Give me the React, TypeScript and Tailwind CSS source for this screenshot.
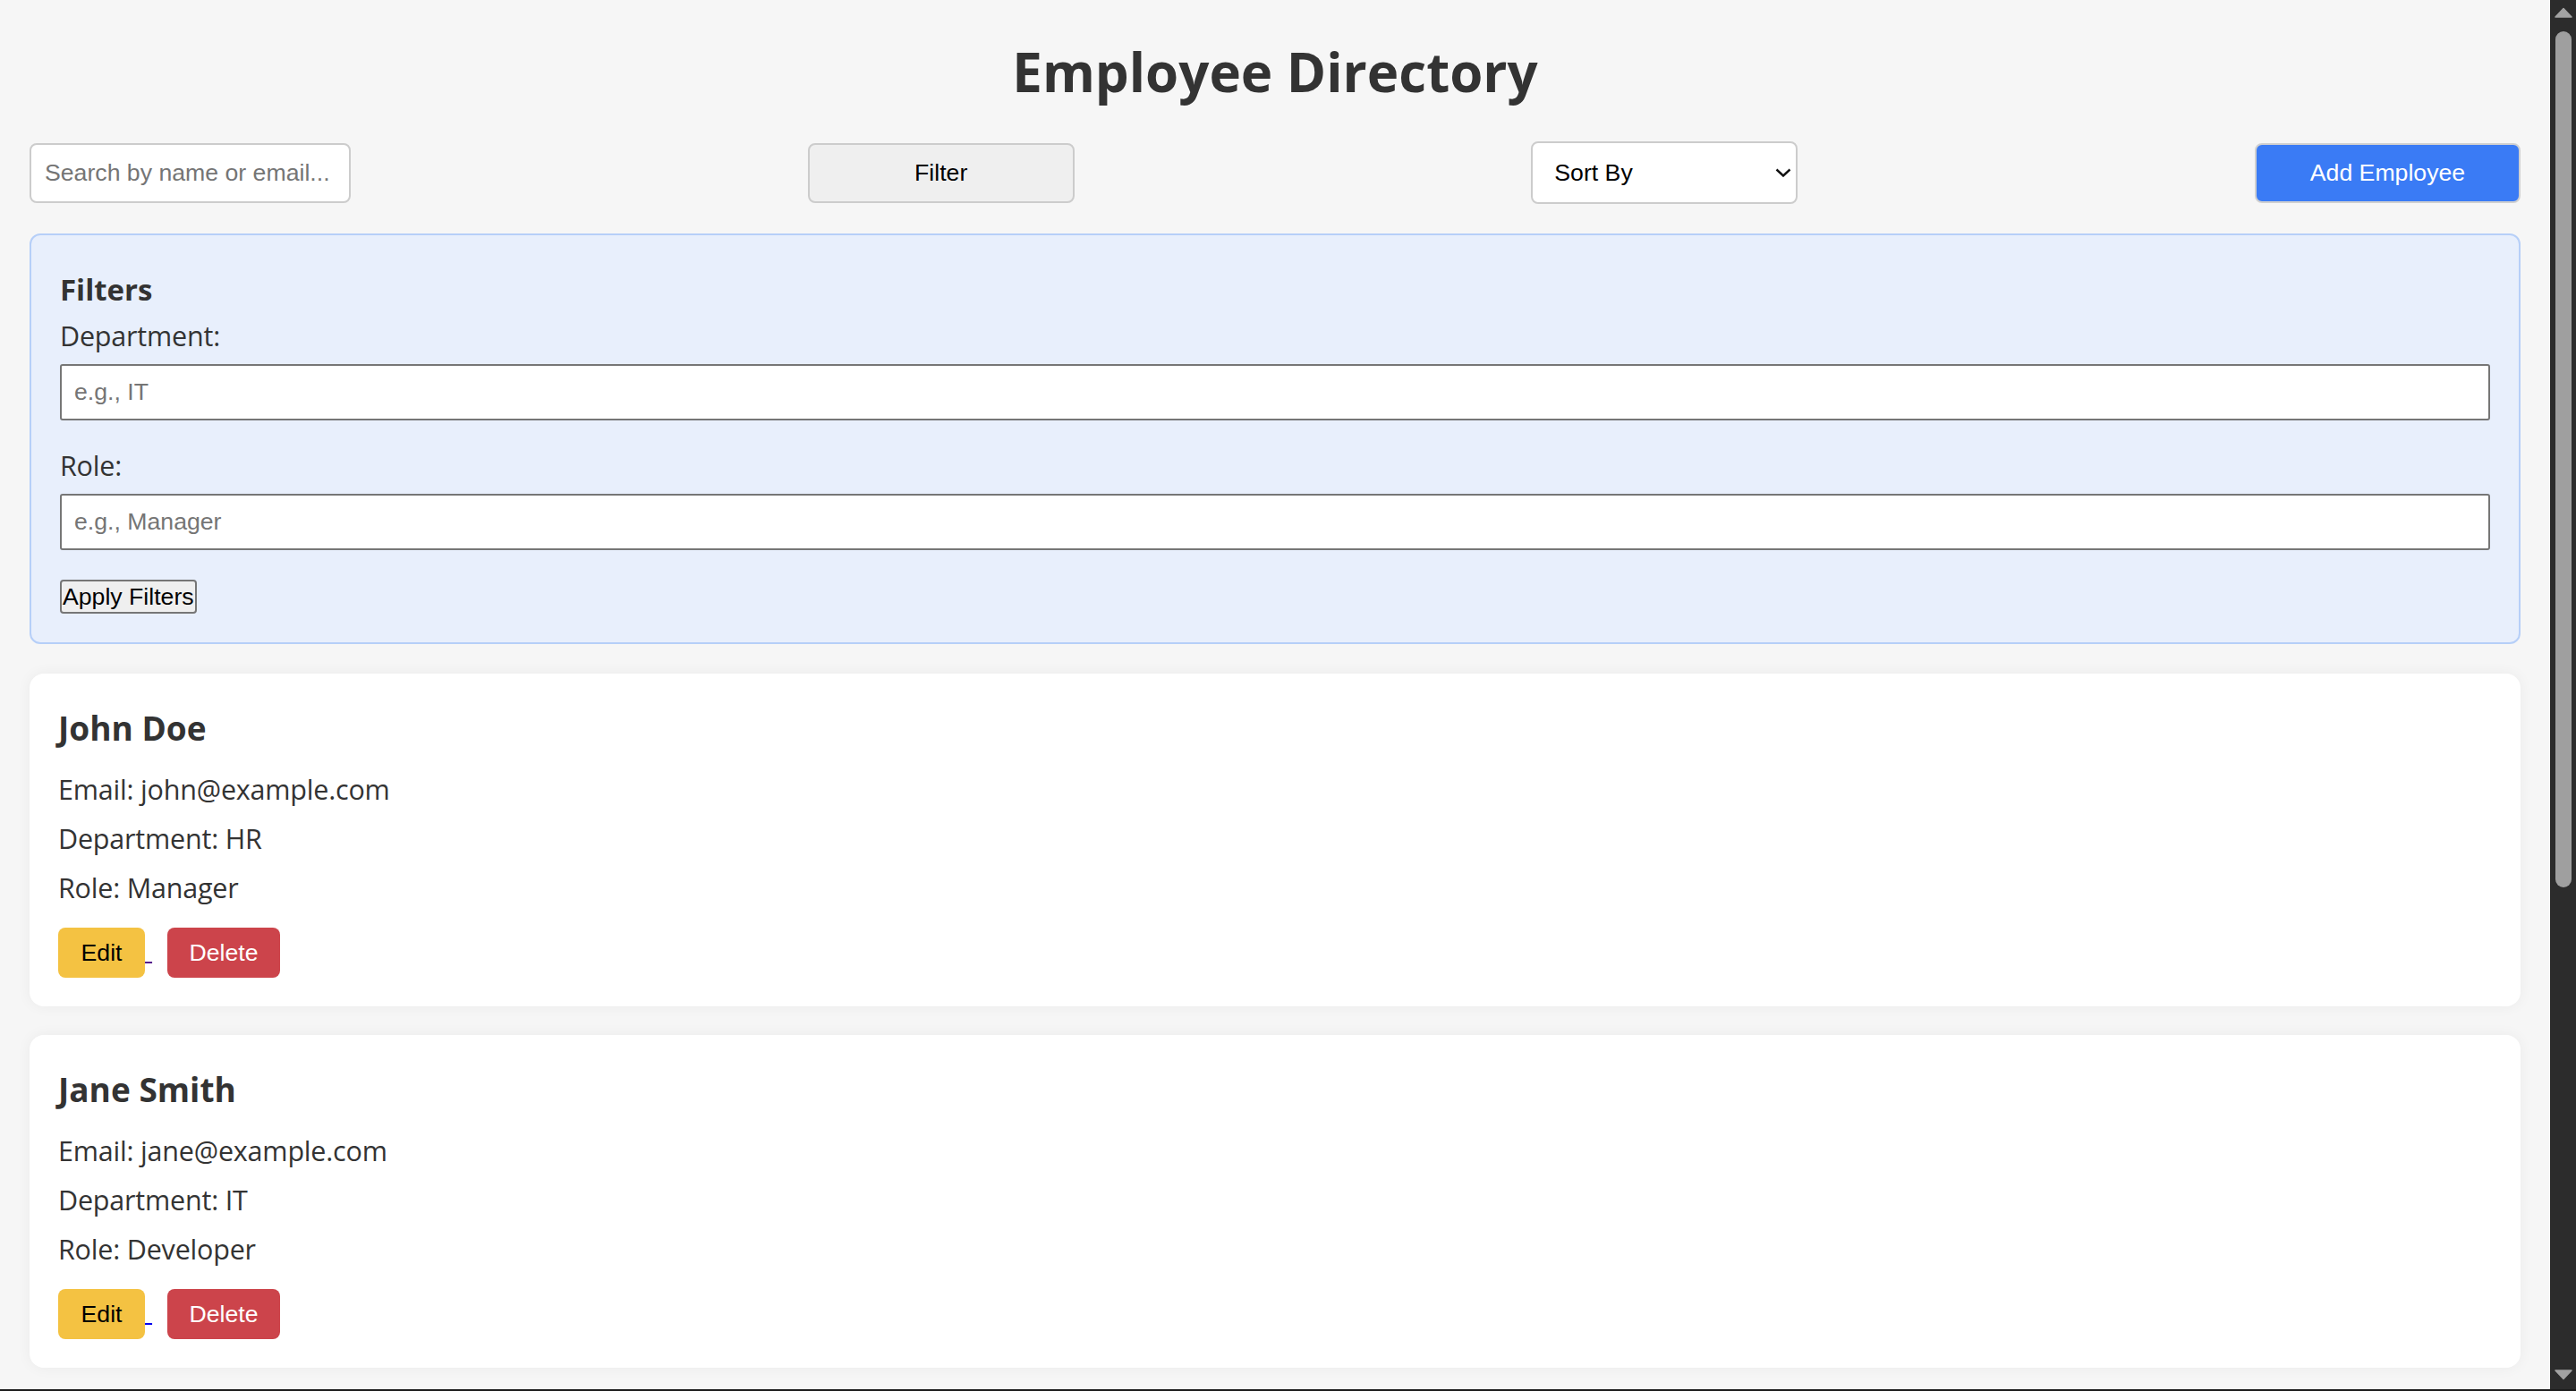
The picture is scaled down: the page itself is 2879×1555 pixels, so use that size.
import { useState } from "react"

type Employee = {
  id: number
  name: string
  email: string
  department: string
  role: string
  visited?: boolean
}

const employees: Employee[] = [
  { id: 1, name: "John Doe", email: "john@example.com", department: "HR", role: "Manager", visited: true },
  { id: 2, name: "Jane Smith", email: "jane@example.com", department: "IT", role: "Developer" },
]

const body = "font-['Open_Sans',sans-serif]"
const ctrl = "font-['Liberation_Sans',Arial,sans-serif] text-[26.67px]"
const text = "text-[30.5px] leading-[55px] tracking-[-0.2px] text-[#333]"

function EmployeeCard({ emp }: { emp: Employee }) {
  return (
    <div className="rounded-[16px] bg-white p-[32px] shadow-[0_0_16px_rgba(0,0,0,0.05)]">
      <h3 className="mb-[12px] text-[37px] font-bold leading-[58px] text-[#333]">{emp.name}</h3>

      <p className={text}>Email: {emp.email}</p>
      <p className={text}>Department: {emp.department}</p>
      <p className={text}>Role: {emp.role}</p>

      {/* Buttons */}
      <div className="mt-[17px] flex items-start">
        <a
          href={`#edit-${emp.id}`}
          className={
            emp.visited
              ? "text-[31px] leading-none text-[#551a8b] underline decoration-2"
              : "text-[31px] leading-none text-[#0000ee] underline decoration-2"
          }
        >
          <button className={`${ctrl} h-[56px] w-[97px] rounded-[8px] bg-[#f4c242] text-black`}>Edit</button>
          {"\u00a0"}
        </a>
        <button className={`${ctrl} ml-[17px] h-[56px] w-[126px] rounded-[8px] bg-[#cc444b] text-white`}>
          Delete
        </button>
      </div>
    </div>
  )
}

function Scrollbar() {
  return (
    <div className="flex w-[29px] shrink-0 flex-col bg-[#2c2c2c]">
      <svg width="29" height="29" viewBox="0 0 29 29">
        <path d="M6 19 L15 9.5 L24 19 Z" fill="#a3a3a3" stroke="#a3a3a3" strokeWidth="1.5" strokeLinejoin="round" />
      </svg>
      <div className="ml-[6px] mt-[6px] h-[957px] w-[18px] rounded-full bg-[#9f9f9f]" />
      <div className="flex-1" />
      <svg width="29" height="29" viewBox="0 0 29 29">
        <path d="M6 8 L15 17.5 L24 8 Z" fill="#a3a3a3" stroke="#a3a3a3" strokeWidth="1.5" strokeLinejoin="round" />
      </svg>
    </div>
  )
}

export default function App() {
  const [search, setSearch] = useState("")
  const [dept, setDept] = useState("")
  const [role, setRole] = useState("")
  const [sort, setSort] = useState("")

  return (
    <div className={`${body} flex h-screen overflow-hidden border-b-2 border-[#1c1c1c] bg-[#f6f6f6] text-[#333]`}>
      <div className="min-w-0 flex-1 overflow-hidden px-[33px] pt-[40px]">
        <h1 className="text-center text-[60px] font-bold leading-[80px] text-[#333]">Employee Directory</h1>

        {/* Controls */}
        <div className="mt-[38px] flex h-[70px] items-center justify-between">
          <input
            value={search}
            onChange={(e) => setSearch(e.target.value)}
            placeholder="Search by name or email..."
            className={`${ctrl} h-[67px] w-[359px] rounded-[8px] border-2 border-[#cccccc] bg-white pl-[15px] text-black outline-none placeholder:text-[#757575]`}
          />

          <button className={`${ctrl} h-[67px] w-[298px] rounded-[8px] border-2 border-[#cccccc] bg-[#efefef] text-black`}>
            Filter
          </button>

          <div className="relative">
            <select
              value={sort}
              onChange={(e) => setSort(e.target.value)}
              className={`${ctrl} h-[70px] w-[298px] appearance-none rounded-[8px] border-2 border-[#cccccc] bg-white pl-[24px] text-black outline-none`}
            >
              <option value="">Sort By</option>
              <option value="name">Name</option>
              <option value="department">Department</option>
            </select>
            <svg
              className="pointer-events-none absolute right-[7px] top-[30px]"
              width="18"
              height="10"
              viewBox="0 0 18 10"
              fill="none"
            >
              <path d="M1.5 1.5 L9 8.5 L16.5 1.5" stroke="#111" strokeWidth="2.4" />
            </svg>
          </div>

          <button className={`${ctrl} h-[67px] w-[297px] rounded-[8px] border-2 border-[#d0d0d0] bg-[#3a7bf5] text-white`}>
            Add Employee
          </button>
        </div>

        {/* Filters */}
        <div className="mt-[33px] rounded-[12px] border-2 border-[#b6cff8] bg-[#e8effc] px-[32px] pt-[41px] pb-[32px]">
          <h4 className="mb-[9px] text-[33px] font-bold leading-[40px] text-[#333]">Filters</h4>

          <label className="block text-[30.5px] leading-[44px] tracking-[-0.2px] text-[#333]">Department:</label>
          <input
            value={dept}
            onChange={(e) => setDept(e.target.value)}
            placeholder="e.g., IT"
            className={`${ctrl} mt-[10px] block h-[63px] w-full rounded-[3px] border-2 border-[#767676] bg-white pl-[14px] text-black outline-none placeholder:text-[#757575]`}
          />

          <label className="mt-[28px] block text-[30.5px] leading-[44px] tracking-[-0.2px] text-[#333]">Role:</label>
          <input
            value={role}
            onChange={(e) => setRole(e.target.value)}
            placeholder="e.g., Manager"
            className={`${ctrl} mt-[10px] block h-[63px] w-full rounded-[3px] border-2 border-[#767676] bg-white pl-[14px] text-black outline-none placeholder:text-[#757575]`}
          />

          <button
            className={`${ctrl} mt-[33px] block h-[38px] rounded-[4px] border-2 border-[#767676] bg-[#efefef] px-[1px] leading-none text-black`}
          >
            Apply Filters
          </button>
        </div>

        {/* Employee list */}
        <div className="mt-[33px] flex flex-col gap-[32px]">
          {employees.map((emp) => (
            <EmployeeCard key={emp.id} emp={emp} />
          ))}
        </div>
      </div>

      <Scrollbar />
    </div>
  )
}
